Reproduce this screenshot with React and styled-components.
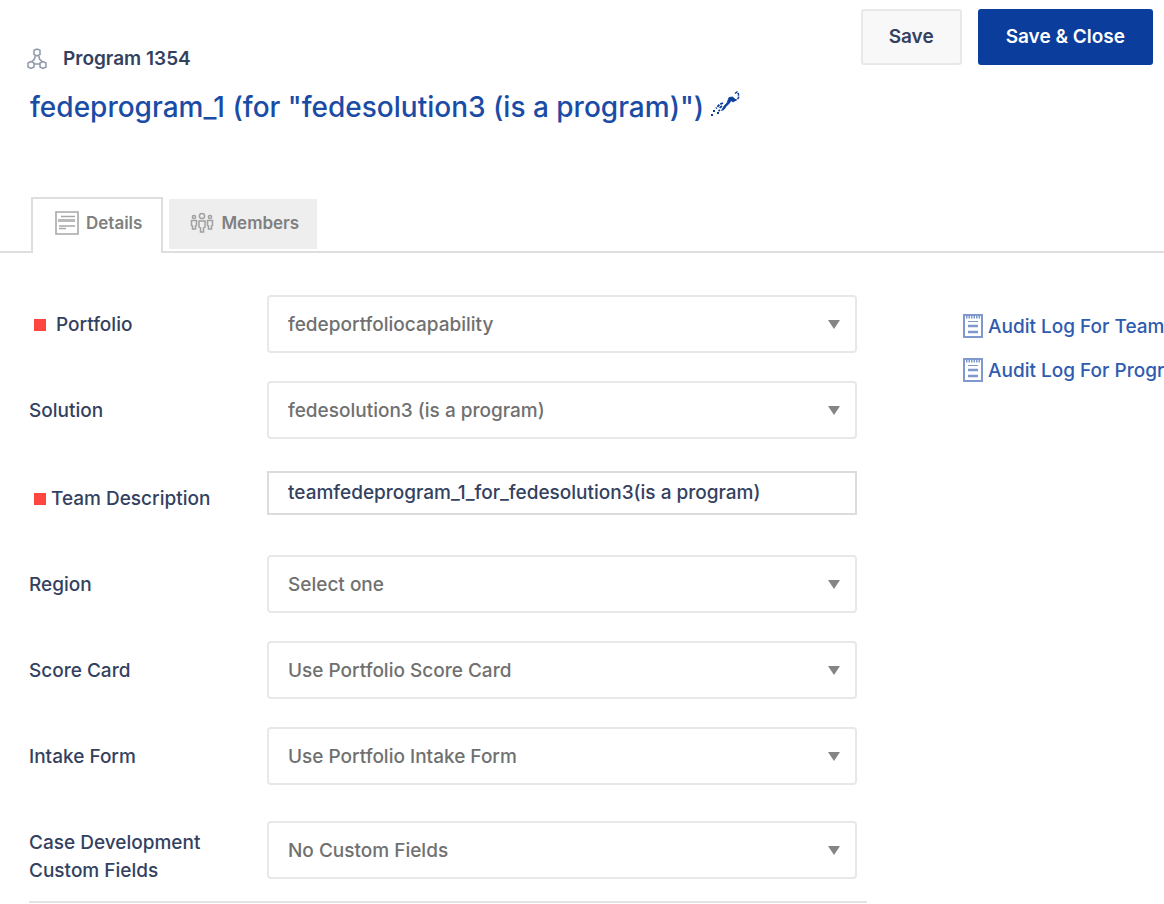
import React, { useId, useState } from "react";
import styled, { createGlobalStyle } from "styled-components";

const selectFields = {
  portfolio: "fedeportfoliocapability",
  solution: "fedesolution3 (is a program)",
  region: "Select one",
  scoreCard: "Use Portfolio Score Card",
  intakeForm: "Use Portfolio Intake Form",
  customFields: "No Custom Fields"
};

const ProgramIcon = () => (
  <svg width="20" height="22" viewBox="0 0 20 22" fill="none" stroke="#8f98ab" strokeWidth="1.5">
    <path d="M7 2.2 10 1l3 1.2v4.3L10 8 7 6.5z" />
    <path d="M4 13.5 1 15v4l3 1.5L7 19v-4zM16 13.5 13 15v4l3 1.5 3-1.5v-4z" />
    <path d="M8.2 8 7.5 11 5 13.5M11.8 8l.7 3 2.5 2.5M7 16h6" />
  </svg>
);

const PenIcon = () => (
  <svg width="30" height="26" viewBox="0 0 30 26" fill="none" stroke="#0b3d9c">
    <path d="M25 2.5 27 1l1.5 2v4L26 9h-2" strokeWidth="1.5" strokeDasharray="3 .8" />
    <path d="m19 6.5 3.5-.5 3.5 3-3 2-2-1.5-1.5 2.5-3.5 3.5-2 3-2.5 1 3-5 2.5-2.5z" fill="#0b3d9c" strokeWidth=".8" />
    <path d="m13 12-3.5 1.5-3.5 4M12 15l-3 2.5M10 19l-1.5 1" strokeWidth="1.8" strokeDasharray="3 1" />
    <path d="M1 23h2v2H1zM3 19h2v2H3zM7 21h2v2H7z" fill="#0b3d9c" stroke="none" />
  </svg>
);

const DetailsIcon = () => (
  <svg width="24" height="24" viewBox="0 0 24 24" fill="none" stroke="#a8a8a8">
    <path d="M1 1h22v22H1z" strokeWidth="1.6" />
    <path d="M6 5.5h14M4 15h16M4 17.5h7" strokeWidth="1.5" />
    <path d="M3 9.5h17" strokeWidth="3" stroke="#b9b9b9" />
  </svg>
);

const MembersIcon = () => (
  <svg width="24" height="22" viewBox="0 0 24 22" fill="none" stroke="#a0a0a0" strokeWidth="1.5">
    <circle cx="12" cy="4" r="2.6" />
    <path d="M9 9h6v6l-1.5 1v4h-3v-4L9 15z" />
    <circle cx="4" cy="5" r="1.6" />
    <path d="M1.5 8.5h5v5l-1 .5v3h-3v-3l-1-.5z" />
    <circle cx="20" cy="5" r="1.6" />
    <path d="M17.5 8.5h5v5l-1 .5v3h-3v-3l-1-.5z" />
  </svg>
);

const LogIcon = () => (
  <svg width="20" height="24" viewBox="0 0 20 24" fill="none" stroke="#7f98cd">
    <path d="M1 1h18v22H1z" strokeWidth="2" />
    <path d="M3 3h14" strokeWidth="3" strokeDasharray="1.5 1" />
    <path d="M5 7.5h10" strokeWidth="1" />
    <path d="M5 12h10M5 18h10" strokeWidth="2.5" />
  </svg>
);

function SelectField({ label, name, required, tall }) {
  const id = useId();
  return (
    <Row $tall={tall}>
      <Label htmlFor={id} $tall={tall}>
        {required && <Required $gap={10} />}
        {label}
      </Label>
      <SelectWrap>
        <Select id={id} name={name} required={required}>
          <option>{selectFields[name]}</option>
        </Select>
      </SelectWrap>
    </Row>
  );
}

export default function App() {
  const [tab, setTab] = useState("details");
  const [description, setDescription] = useState(
    "teamfedeprogram_1_for_fedesolution3(is a program)"
  );

  return (
    <>
      <GlobalStyle />
      <Page>
        <Header>
          <div>
            <ProgramNumber>
              <ProgramIcon />
              Program 1354
            </ProgramNumber>
            <Title>
              fedeprogram_1 (for "fedesolution3 (is a program)")
              <EditButton type="button" aria-label="Edit name">
                <PenIcon />
              </EditButton>
            </Title>
          </div>
          <Actions>
            <Button type="submit" form="program">Save</Button>
            <Button type="submit" form="program" $primary>Save &amp; Close</Button>
          </Actions>
        </Header>

        <Tabs role="tablist">
          <Tab
            type="button"
            role="tab"
            aria-selected={tab === "details"}
            $active={tab === "details"}
            onClick={() => setTab("details")}
          >
            <DetailsIcon />
            Details
          </Tab>
          <Tab
            type="button"
            role="tab"
            aria-selected={tab === "members"}
            $active={tab === "members"}
            onClick={() => setTab("members")}
          >
            <MembersIcon />
            Members
          </Tab>
        </Tabs>

        <Content>
          <Form id="program" onSubmit={e => e.preventDefault()}>
            <SelectField label="Portfolio" name="portfolio" required />
            <SelectField label="Solution" name="solution" />
            <InputRow>
              <Label htmlFor="description">
                <Required $gap={5} />
                Team Description
              </Label>
              <Input
                id="description"
                type="text"
                value={description}
                onChange={e => setDescription(e.target.value)}
              />
            </InputRow>
            <SelectField label="Region" name="region" />
            <SelectField label="Score Card" name="scoreCard" />
            <SelectField label="Intake Form" name="intakeForm" />
            <SelectField label="Case Development Custom Fields" name="customFields" tall />
          </Form>
          <Links>
            <LogLink href="#team-log">
              <LogIcon />
              Audit Log For Team
            </LogLink>
            <LogLink href="#program-log">
              <LogIcon />
              Audit Log For Program
            </LogLink>
          </Links>
        </Content>
      </Page>
    </>
  );
}

const GlobalStyle = createGlobalStyle`
  * {
    box-sizing: border-box;
  }
  body {
    margin: 0;
    background: #fff;
    color: #33415f;
    font-family: Inter, "Liberation Sans", sans-serif;
    font-size: 19px;
    font-weight: 500;
    overflow-x: hidden;
  }
  button, input, select {
    font: inherit;
  }
`;

const Page = styled.div`
  overflow: hidden;
`;

const Header = styled.header`
  display: flex;
  justify-content: space-between;
  padding: 9px 11px 0 27px;
`;

const ProgramNumber = styled.div`
  display: flex;
  align-items: center;
  gap: 16px;
  margin-top: 37px;
  line-height: 26px;
  font-weight: 600;
`;

const Title = styled.h1`
  display: flex;
  align-items: center;
  gap: 6px;
  margin: 17px 0 0 3px;
  color: #1a4ca6;
  font-size: 28px;
  font-weight: 500;
  line-height: 36px;
`;

const EditButton = styled.button`
  display: flex;
  padding: 0 0 6px;
  border: none;
  background: none;
  cursor: pointer;
`;

const Actions = styled.div`
  display: flex;
  align-items: flex-start;
  gap: 16px;
`;

const Button = styled.button`
  height: 56px;
  padding: 0 26px 2px;
  border: 2px solid ${props => (props.$primary ? "#0b3d9c" : "#e8e8e8")};
  border-radius: 3px;
  background: ${props => (props.$primary ? "#0b3d9c" : "#f8f8f8")};
  color: ${props => (props.$primary ? "#fff" : "#33415f")};
  font-weight: 600;
  cursor: pointer;
`;

const Tabs = styled.div`
  display: flex;
  align-items: flex-end;
  gap: 6px;
  height: 56px;
  margin-top: 72px;
  padding-left: 31px;
  box-shadow: inset 0 -2px #dedede;
`;

const Tab = styled.button`
  display: flex;
  align-items: center;
  gap: 7px;
  height: ${props => (props.$active ? "56px" : "50px")};
  margin-bottom: ${props => (props.$active ? "0" : "4px")};
  padding: ${props => (props.$active ? "0 19px 6px 22px" : "0 18px 2px 21px")};
  border: ${props => (props.$active ? "2px solid #dedede" : "none")};
  border-bottom: none;
  background: ${props => (props.$active ? "#fff" : "#eee")};
  color: #808080;
  font-size: 17px;
  font-weight: 600;
  cursor: pointer;
`;

const Content = styled.main`
  display: flex;
  align-items: flex-start;
`;

const Form = styled.form`
  flex: 0 0 72%;
  min-width: 0;
  margin-left: 29px;
  padding: 42px 10px 16px 0;
  border-bottom: 2px solid #e4e4e4;
`;

const Row = styled.div`
  display: flex;
  align-items: ${props => (props.$tall ? "flex-start" : "center")};
  margin-top: ${props => (props.$tall ? "36px" : "28px")};
  &:first-child {
    margin-top: 0;
  }
`;

const InputRow = styled(Row)`
  align-items: flex-start;
  padding: 4px 0 12px;
`;

const Label = styled.label`
  flex: 0 0 238px;
  padding: ${props => (props.$tall ? "8px" : "2px")} 40px 0 0;
  line-height: 28px;
  ${InputRow} & {
    padding-top: 14px;
  }
`;

const Required = styled.span`
  display: inline-block;
  width: 12px;
  height: 12px;
  margin-left: 5px;
  margin-right: ${props => props.$gap}px;
  background: #ff4540;
`;

const SelectWrap = styled.div`
  display: flex;
  flex: 1;
  align-items: center;
  border: 2px solid #e8e8e8;
  border-radius: 4px;
  background: #fff;
  &::after {
    content: "";
    margin: 0 15px 0 -27px;
    border: 6px solid transparent;
    border-top: 9px solid #858585;
    border-bottom: none;
    pointer-events: none;
  }
`;

const Select = styled.select`
  appearance: none;
  flex: 1;
  min-width: 0;
  height: 54px;
  padding: 0 40px 0 19px;
  border: none;
  background: transparent;
  color: #707070;
`;

const Input = styled.input`
  flex: 1;
  min-width: 0;
  height: 44px;
  padding: 0 19px 2px;
  border: 2px solid #dcdcdc;
  background: #fff;
  color: #33415f;
`;

const Links = styled.nav`
  display: flex;
  flex-direction: column;
  gap: 16px;
  margin: 59px 0 0 96px;
`;

const LogLink = styled.a`
  display: flex;
  align-items: center;
  gap: 5px;
  height: 28px;
  color: #2f5baf;
  text-decoration: none;
  white-space: nowrap;
`;
